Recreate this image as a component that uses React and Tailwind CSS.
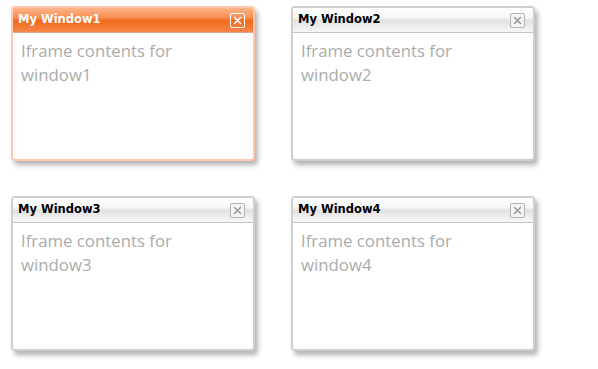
import React from "react";

function CloseBtn({ active }) {
  return (
    <div
      className={
        active
          ? "w-[15px] h-[15px] rounded-[2px] border border-white flex items-center justify-center"
          : "w-[15px] h-[15px] rounded-[2px] border border-[#b4b4b4] bg-[#f4f4f4] flex items-center justify-center"
      }
    >
      <svg width="9" height="9" viewBox="0 0 9 9">
        <path
          d="M1.5 1.5 L7.5 7.5 M7.5 1.5 L1.5 7.5"
          stroke={active ? "#ffffff" : "#9a9a9a"}
          strokeWidth="1.6"
          strokeLinecap="round"
        />
      </svg>
    </div>
  );
}

function Win({ n, active }) {
  return (
    <div
      className={
        active
          ? "w-[244px] h-[155px] rounded-[4px] border-2 border-[#ffc8ad] bg-white shadow-[3px_4px_5px_rgba(0,0,0,0.3)] flex flex-col overflow-hidden"
          : "w-[244px] h-[155px] rounded-[4px] border-2 border-[#cfcfcf] bg-white shadow-[3px_4px_5px_rgba(0,0,0,0.3)] flex flex-col overflow-hidden"
      }
    >
      <div
        className={
          active
            ? "h-[25px] shrink-0 flex items-center justify-between pl-[5px] pr-[8px] border-b border-[#d8a88c] bg-[linear-gradient(to_bottom,#fbb58a_0%,#f88e52_40%,#f26a1e_52%,#f4772e_75%,#f6864a_100%)]"
            : "h-[25px] shrink-0 flex items-center justify-between pl-[5px] pr-[8px] border-b border-[#c4c4c4] bg-[linear-gradient(to_bottom,#ffffff_0%,#f6f6f6_40%,#e2e2e2_52%,#ececec_75%,#f6f6f6_100%)]"
        }
      >
        <span
          className={
            active
              ? "text-white font-bold text-[11.5px] leading-none font-['DejaVu_Sans',sans-serif]"
              : "text-black font-bold text-[11.5px] leading-none font-['DejaVu_Sans',sans-serif]"
          }
        >
          My Window{n}
        </span>
        <CloseBtn active={active} />
      </div>
      <div className="px-[8px] pt-[6px] text-[16.8px] leading-[24px] text-[#ababab] font-['Open_Sans',sans-serif]">
        Iframe contents for
        <br />
        window{n}
      </div>
    </div>
  );
}

export default function App() {
  return (
    <div className="w-[598px] h-[369px] bg-white pl-[11px] pt-[6px]">
      <div className="grid grid-cols-[244px_244px] gap-x-[36px] gap-y-[35px]">
        <Win n={1} active />
        <Win n={2} />
        <Win n={3} />
        <Win n={4} />
      </div>
    </div>
  );
}
